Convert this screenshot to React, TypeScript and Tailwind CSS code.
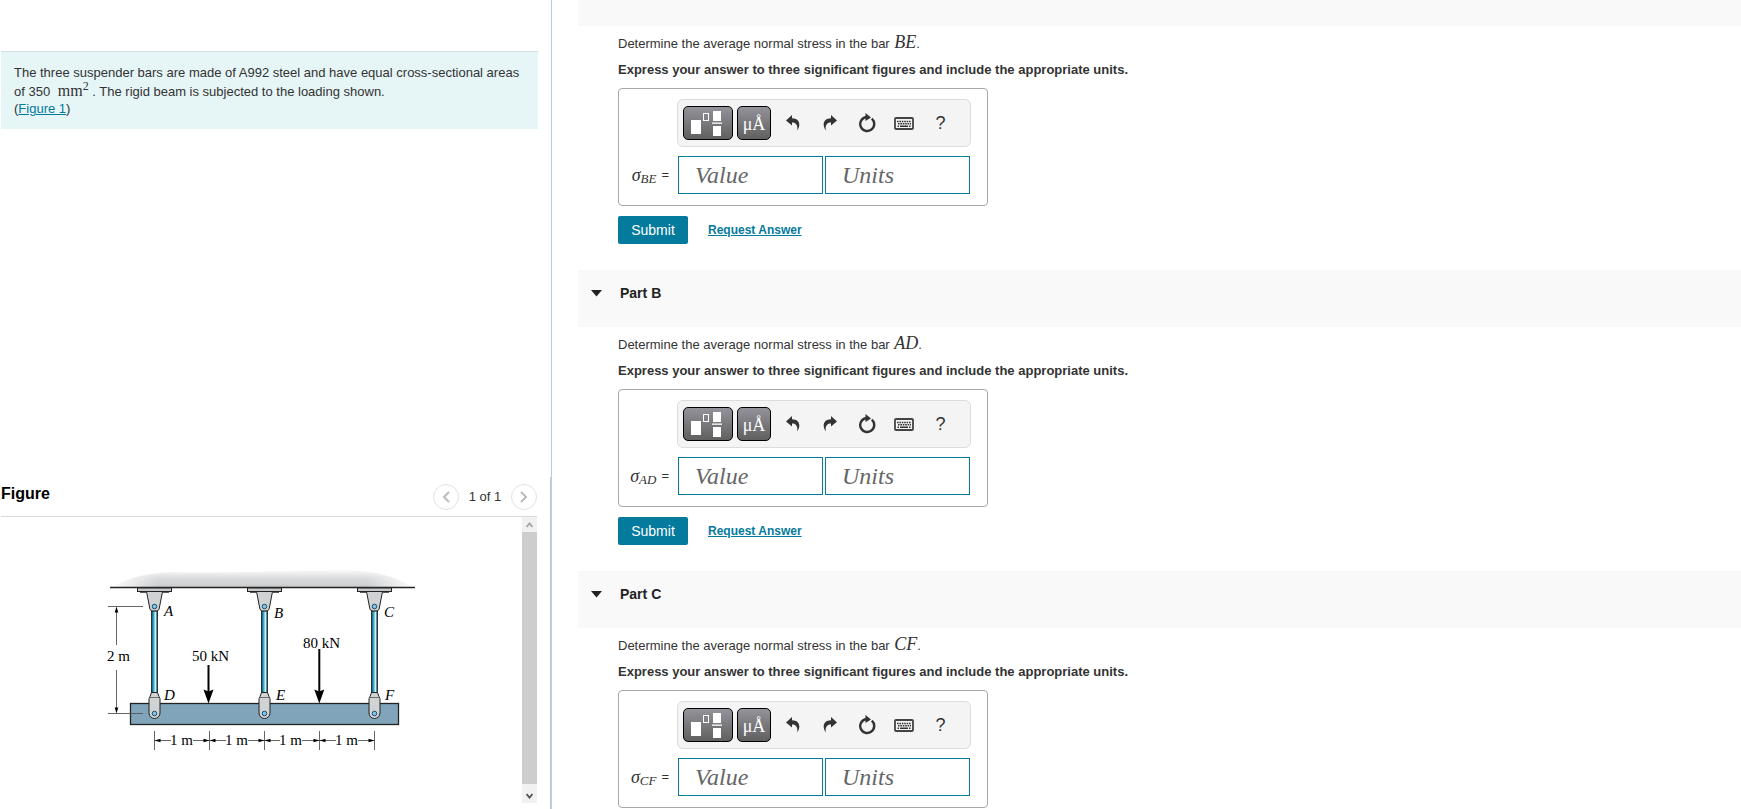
import type { ReactNode } from 'react';

interface Part {
  id: string;
  bar: string;
}

const parts: Part[] = [
  { id: 'A', bar: 'BE' },
  { id: 'B', bar: 'AD' },
  { id: 'C', bar: 'CF' },
];

const supports = [
  { x: 154, top: 'A', topX: 164, topY: 615, bottom: 'D', bottomX: 164 },
  { x: 264, top: 'B', topX: 274, topY: 617, bottom: 'E', bottomX: 276 },
  { x: 374, top: 'C', topX: 384, topY: 616, bottom: 'F', bottomX: 385 },
];

const loads = [
  { x: 208.5, from: 664, label: '50 kN', labelX: 192, labelY: 660 },
  { x: 319.3, from: 648, label: '80 kN', labelX: 303, labelY: 647 },
];

const spans = [
  { x: 154.5, labelX: 170 },
  { x: 209.5, labelX: 225 },
  { x: 264.5, labelX: 279 },
  { x: 319.5, labelX: 335 },
];

function UndoIcon() {
  return (
    <svg width="14" height="16" viewBox="0 0 14 16" fill="#333" aria-hidden="true">
      <path d="M6 0 0 5.400 6 10.600V7.600C10 7.600 12 10 11.200 15.600 15.200 9.500 13.500 3.400 6 3.200Z" />
    </svg>
  );
}

function RedoIcon() {
  return (
    <svg width="14" height="16" viewBox="0 0 14 16" fill="#333" aria-hidden="true">
      <path d="M8 0 14 5.400 8 10.600V7.600C4 7.600 2 10 2.800 15.600-1.200 9.500.5 3.400 8 3.200Z" />
    </svg>
  );
}

function ResetIcon() {
  return (
    <svg width="18" height="20" viewBox="0 0 18 20" fill="none" aria-hidden="true">
      <path d="M13.800 5.700A7 7 0 1 1 9 4" stroke="#333" strokeWidth="2.400" />
      <path d="M7.500 0v8l5.500-3.600Z" fill="#333" />
    </svg>
  );
}

function KeyboardIcon() {
  return (
    <svg width="20" height="13" viewBox="0 0 20 13" fill="none" aria-hidden="true">
      <rect x="1" y="1" width="18" height="11" rx="1" stroke="#444" strokeWidth="1.800" />
      <path d="M3 4.500h14M4 6.800h13" stroke="#333" strokeWidth="1.400" strokeDasharray="1.600 .8" />
      <path d="M3.500 9.300h1.500M6 9.300h8M15 9.300h1.500" stroke="#333" strokeWidth="1.400" />
    </svg>
  );
}

function TemplateIcon() {
  return (
    <svg width="34" height="26" viewBox="0 0 34 26" aria-hidden="true">
      <rect x="0" y="10" width="10" height="14" fill="#fff" />
      <rect x="12.500" y="3.500" width="5" height="7" fill="none" stroke="#fff" />
      <rect x="22" y="1" width="8" height="10" fill="#fff" />
      <rect x="21" y="12.500" width="10" height="1.300" fill="#fff" />
      <rect x="22" y="16" width="8" height="10" fill="#fff" />
    </svg>
  );
}

function BeamFigure() {
  return (
    <svg
      className="h-[190px] w-[320px]"
      viewBox="102 565 320 190"
      fontFamily='"Liberation Serif", serif'
      fontSize="15"
      role="img"
      aria-label="Rigid beam DEF hung from three suspender bars"
    >
      <defs>
        <linearGradient id="ceiling" x1="0" y1="0" x2="0" y2="1">
          <stop offset="0" stopColor="#d0d1d3" stopOpacity="0.1" />
          <stop offset="0.5" stopColor="#d0d1d3" stopOpacity="0.8" />
          <stop offset="1" stopColor="#cbccce" />
        </linearGradient>
        <linearGradient id="fade" x1="0" y1="0" x2="1" y2="0">
          <stop offset="0" stopColor="#000" />
          <stop offset="0.16" stopColor="#fff" />
          <stop offset="0.84" stopColor="#fff" />
          <stop offset="1" stopColor="#000" />
        </linearGradient>
        <mask id="ends">
          <rect x="110" y="565" width="305" height="24" fill="url(#fade)" />
        </mask>
        <linearGradient id="rod" x1="0" y1="0" x2="1" y2="0">
          <stop offset="0" stopColor="#1a86ab" />
          <stop offset="0.4" stopColor="#35b0d5" />
          <stop offset="0.65" stopColor="#e0f5fb" />
          <stop offset="1" stopColor="#2a9cc2" />
        </linearGradient>
      </defs>

      {/* Ceiling */}
      <path
        d="M112 586C128 577 146 572 172 571C230 573 290 569 340 569C375 569 397 576 413 586Z"
        fill="url(#ceiling)"
        mask="url(#ends)"
      />
      <path d="M110 586.500H415" stroke="#222" strokeWidth="1.300" />

      {/* Beam */}
      <rect x="130.500" y="702.500" width="268" height="21" fill="#80a5ba" stroke="#222" strokeWidth="1.300" />

      {supports.map((s) => (
        <g key={s.top}>
          <path d={`M${s.x - 14} 591h6M${s.x + 9} 591h6`} stroke="#222" strokeWidth="1.500" />
          <rect x={s.x - 16.5} y="587" width="34" height="3.500" fill="#c8cacc" stroke="#222" />
          <path
            d={`M${s.x - 7.5} 590.500h16L${s.x + 5.5} 606a5 5 0 0 1-10 0Z`}
            fill="#d0d2d4"
            stroke="#222"
          />
          <rect x={s.x - 2.300} y="610" width="5.600" height="82" fill="url(#rod)" stroke="#222" strokeWidth="1.200" />
          <path
            d={`M${s.x - 2.5} 691.500h6l1.500 4 1 2V712a5.500 5.500 0 0 1-11 0V697.500l1-2Z`}
            fill="#d0d2d4"
            stroke="#222"
          />
          <path d={`M${s.x - 4.5} 696.500h10`} stroke="#555" strokeWidth=".8" />
          <circle cx={s.x + 0.5} cy="605.500" r="2.300" fill="#7cc5e8" stroke="#1f4f66" />
          <circle cx={s.x + 0.5} cy="712.500" r="2.300" fill="#7cc5e8" stroke="#1f4f66" />
          <text x={s.topX} y={s.topY} fontStyle="italic">{s.top}</text>
          <text x={s.bottomX} y="699" fontStyle="italic">{s.bottom}</text>
        </g>
      ))}

      {loads.map((load) => (
        <g key={load.label}>
          <path d={`M${load.x} ${load.from}V692`} stroke="#000" strokeWidth="2" />
          <path d={`M${load.x - 5} 688.500l5 2 5-2-5 14Z`} />
          <text x={load.labelX} y={load.labelY}>{load.label}</text>
        </g>
      ))}

      {/* Height dimension */}
      <path d="M108 605.500h35M108 712.500h35M116.500 607v37M116.500 669v42" stroke="#555" strokeWidth=".9" />
      <path d="M116.500 605.500l-1.800 6h3.600ZM116.500 712.500l-1.800-6h3.600Z" />
      <text x="107" y="660">2 m</text>

      {/* Span dimensions */}
      {spans.map((s) => (
        <g key={s.x}>
          <path
            d={`M${s.x} 730v19M${s.x} 739.500H${s.labelX + 1}M${s.labelX + 23} 739.500H${s.x + 55}`}
            stroke="#555"
            strokeWidth=".9"
          />
          <path d={`M${s.x} 739.500l6-1.800v3.600ZM${s.x + 55} 739.500l-6-1.800v3.600Z`} />
          <text x={s.labelX} y="744">1 m</text>
        </g>
      ))}
      <path d="M374.500 730v19" stroke="#555" strokeWidth=".9" />
    </svg>
  );
}

function ToolButton({ label, children }: { label: string; children: ReactNode }) {
  return (
    <button type="button" aria-label={label} className="flex h-[34px] w-[37px] items-center justify-center">
      {children}
    </button>
  );
}

function AnswerBox({ id, bar }: Part) {
  const inputClass =
    'h-[38px] w-[145px] border border-[#047b9b] bg-white px-4 font-["Liberation_Serif",serif] text-2xl italic text-[#333] placeholder:text-[#666] outline-none';

  return (
    <div className="mt-2 w-[370px] rounded-[4px] border border-[#a8a8a8] pt-2.5 pb-[11px]">
      <div className="mr-4 ml-[58px] flex h-12 items-center rounded-md border border-[#dcdcdc] bg-[#f4f4f4] pl-[5px]">
        <button
          type="button"
          aria-label="Templates"
          className="flex h-[34px] w-[50px] items-center justify-center rounded-[5px] border border-black bg-linear-to-b from-[#94939b] to-[#606060]"
        >
          <TemplateIcon />
        </button>
        <button
          type="button"
          aria-label="Symbols"
          className="mr-[3px] ml-1 h-[34px] w-[34px] rounded-[5px] border border-black bg-linear-to-b from-[#94939b] to-[#606060] pt-px text-center font-['Liberation_Serif',serif] text-lg leading-8 text-white"
        >
          μÅ
        </button>
        <ToolButton label="Undo"><UndoIcon /></ToolButton>
        <ToolButton label="Redo"><RedoIcon /></ToolButton>
        <ToolButton label="Reset"><ResetIcon /></ToolButton>
        <ToolButton label="Keyboard shortcuts"><KeyboardIcon /></ToolButton>
        <ToolButton label="Help"><span className="text-lg text-[#333]">?</span></ToolButton>
      </div>
      <div className="mt-[9px] flex items-center">
        <label
          htmlFor={`value-${id}`}
          className="flex w-[59px] items-center justify-end gap-[5px] pr-[9px] text-[13px] leading-5"
        >
          <span className="font-['Liberation_Serif',serif] text-lg leading-5 italic">
            σ<sub className="bottom-[-2px] text-[13px]">{bar}</sub>
          </span>
          <span>=</span>
        </label>
        <input id={`value-${id}`} type="text" placeholder="Value" className={inputClass} />
        <input
          type="text"
          aria-label={`Units for part ${id}`}
          placeholder="Units"
          className={`ml-0.5 ${inputClass}`}
        />
      </div>
    </div>
  );
}

function PartSection({ id, bar }: Part) {
  return (
    <section className="pb-[26px]">
      {/* Part A is scrolled so that only the end of its header shows */}
      {id === 'A' ? (
        <div className="h-[26px] bg-[#f9f9f9]" />
      ) : (
        <button type="button" className="flex h-[57px] w-full items-start bg-[#f9f9f9] pt-[13px] pl-[13px]">
          <span className="flex h-5 w-[29px] items-center">
            <svg width="11" height="7" viewBox="0 0 11 7" fill="#222" aria-hidden="true">
              <path d="M0 0h11L5.500 6.500Z" />
            </svg>
          </span>
          <span className="text-sm font-bold text-[#222]">Part {id}</span>
        </button>
      )}
      <div className="pt-2 pl-10">
        <p className="leading-5">
          Determine the average normal stress in the bar{' '}
          <i className="ml-px font-['Liberation_Serif',serif] text-lg leading-4">{bar}</i>.
        </p>
        <p className="mt-1.5 leading-5 font-bold">
          Express your answer to three significant figures and include the appropriate units.
        </p>
        <AnswerBox id={id} bar={bar} />
        <div className="mt-2.5 flex items-center gap-5">
          <button type="button" className="h-7 w-[70px] rounded-[2px] bg-[#047a9c] text-sm text-white">
            Submit
          </button>
          <a href="#" className="text-xs font-bold text-[#047a9c] underline">Request Answer</a>
        </div>
      </div>
    </section>
  );
}

export default function App() {
  return (
    <div className="flex h-screen overflow-hidden bg-white font-['Liberation_Sans',Arial,sans-serif] text-[13px] text-[#333]">
      <aside className="flex w-[552px] shrink-0 flex-col">
        <div className="flex-1 border-r border-[#b9cbdd] pt-[51px] pr-[13px] pl-px">
          <div className="border-t border-[#d3dfe2] bg-[#e6f5f6] px-[13px] py-3">
            <p className="leading-[17px]">
              The three suspender bars are made of A992 steel and have equal cross-sectional areas of 350{' '}
              <span className="ml-1 font-['Liberation_Serif',serif] text-base leading-[19px]">
                mm<sup className="text-xs">2</sup>
              </span>{' '}
              . The rigid beam is subjected to the loading shown.
              <br />
              (<a href="#figure" className="text-[#047a9c] underline">Figure 1</a>)
            </p>
          </div>
        </div>

        <section id="figure" className="border-r-2 border-[#b7cde0] pr-[13px] pb-1.5 pl-px">
          <div className="flex h-10 items-center border-b border-[#d9d9d9]">
            <h2 className="pb-1.5 text-base font-bold text-black">Figure</h2>
            <div className="ml-auto flex items-center">
              <button
                type="button"
                aria-label="Previous figure"
                className="flex h-[26px] w-[26px] items-center justify-center rounded-full border border-[#e2e2e2]"
              >
                <svg width="8" height="12" viewBox="0 0 8 12" fill="none" stroke="#bbb" strokeWidth="2" aria-hidden="true">
                  <path d="M7 1 2 6l5 5" />
                </svg>
              </button>
              <span className="w-[52px] text-center">1 of 1</span>
              <button
                type="button"
                aria-label="Next figure"
                className="flex h-[26px] w-[26px] items-center justify-center rounded-full border border-[#e2e2e2]"
              >
                <svg width="8" height="12" viewBox="0 0 8 12" fill="none" stroke="#bbb" strokeWidth="2" aria-hidden="true">
                  <path d="m1 1 5 5-5 5" />
                </svg>
              </button>
            </div>
          </div>
          <div className="flex h-[286px]">
            <div className="flex flex-1 justify-center pt-[49px]">
              <BeamFigure />
            </div>
            <div className="flex w-[15px] flex-col bg-[#f1f1f1]">
              <div className="flex h-[15px] items-center justify-center">
                <svg width="7" height="6" viewBox="0 0 7 6" fill="none" stroke="#a3a3a3" strokeWidth="1.800" aria-hidden="true">
                  <path d="M.5 5l3-3.500 3 3.500" />
                </svg>
              </div>
              <div className="flex-1 bg-[#cdcdcd]" />
              <div className="flex h-[19px] items-center justify-center pt-1">
                <svg width="7" height="6" viewBox="0 0 7 6" fill="none" stroke="#505050" strokeWidth="1.800" aria-hidden="true">
                  <path d="M.5 1l3 3.500 3-3.500" />
                </svg>
              </div>
            </div>
          </div>
        </section>
      </aside>

      <main className="min-w-0 flex-1 overflow-y-auto pl-[26px] [scrollbar-width:none]">
        {parts.map((part) => (
          <PartSection key={part.id} id={part.id} bar={part.bar} />
        ))}
      </main>
    </div>
  );
}
